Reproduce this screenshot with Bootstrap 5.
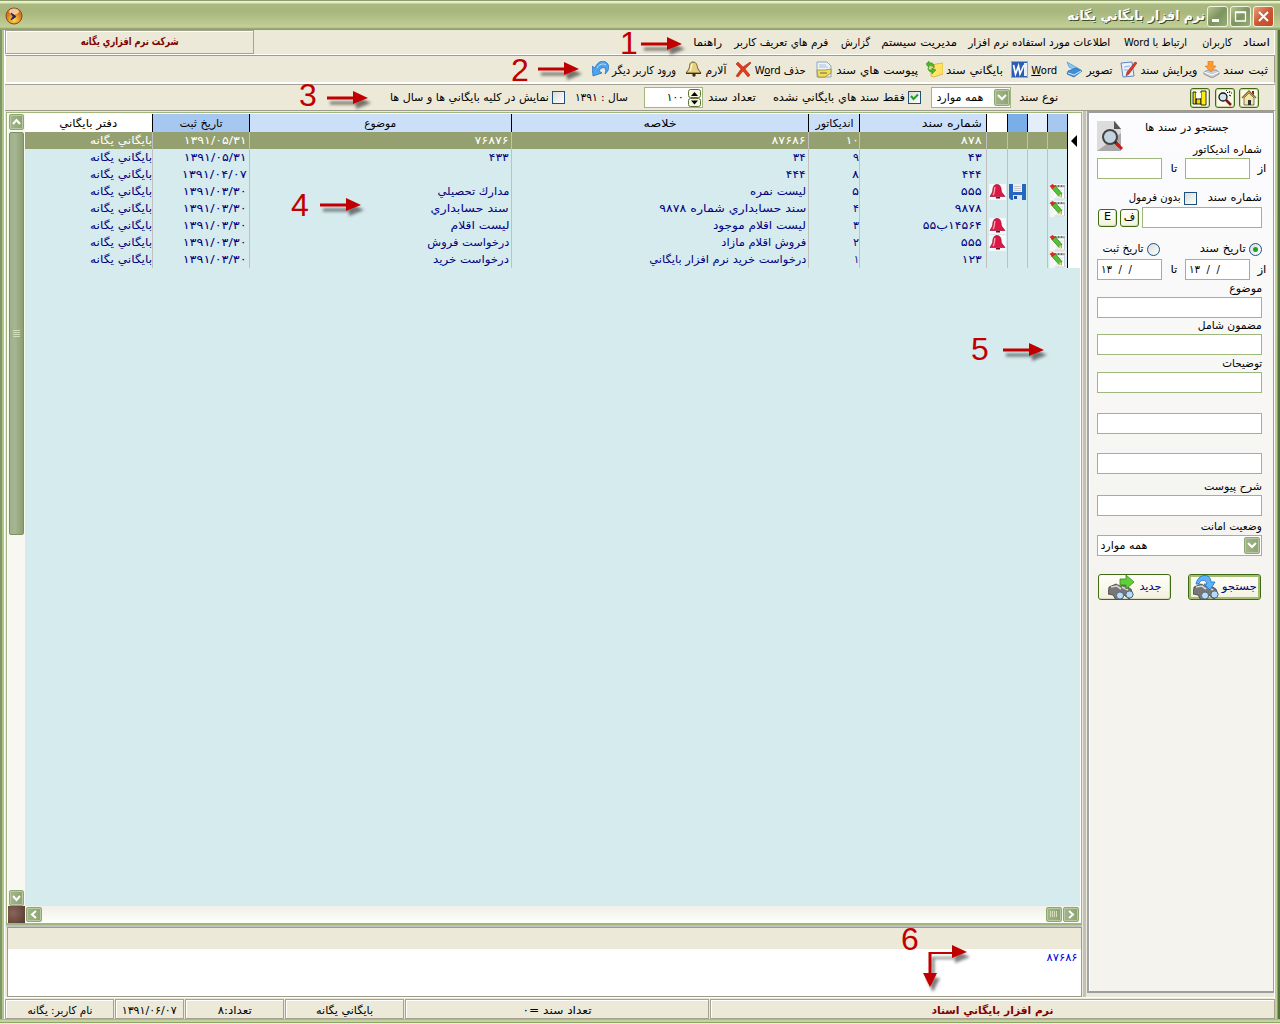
<!DOCTYPE html>
<html lang="fa" dir="rtl">
<head>
<meta charset="utf-8">
<title>نرم افزار بايگاني يگانه</title>
<link rel="stylesheet" href="https://cdn.jsdelivr.net/npm/bootstrap@5.3.0/dist/css/bootstrap.min.css">
<style>
body{width:1280px;height:1024px;overflow:hidden;font:11px/14px "DejaVu Sans",Tahoma,sans-serif;color:#000;background:#ece9d8}
svg{display:block;flex:none}
[data-w]{display:inline-block;white-space:nowrap;transform-origin:100% 50%;flex:none}
.win{width:1280px;height:1024px;padding:0 5px 5px 5px;position:relative;
 background:linear-gradient(#a9b87c,#a9b87c) 0 1019px/100% 1px no-repeat,linear-gradient(#c6d39a 0 2px,#8fa36c 2px 3px,#eef0d4 3px) 0 1020px/100% 4px no-repeat,
 linear-gradient(90deg,#7d9766 0 2px,#b3c389 2px 4px,#fff 4px 5px,#ece9d8 5px 1274px,#fff 1274px 1275px,#c3d094 1275px 1277px,#8ba36a 1277px 1278px,#55703f 1278px)}
.win>*{flex:none}
.titlebar{height:30px;margin:0 -5px;padding:2px 6px 0 5px;gap:2px;background:linear-gradient(#8a9c68 0,#8a9c68 1px,#f2f5d5 1px,#dfe6ba 3px,#a9b980 4px,#a8b77e 12px,#b6c48b 20px,#c2cf98 27px,#8c9f68 29px)}
.wbtn{width:21px;height:21px;border:1px solid #f0f4df;border-radius:3px;background:linear-gradient(135deg,#b5c48f,#7c9460 50%,#98ac76)}
.wbtn.close-x{background:linear-gradient(135deg,#e9a184,#cd5530 50%,#c54a27)}
.wtitle{color:#fff;font-weight:700;font-size:13px;text-shadow:1px 1px 0 #3f4b27}
.menurow{height:25px}
.menus{display:grid;grid-template-columns:38px 45px 77px 153px 87px 42px 106px 60px;justify-items:start;padding:0 5px 0 0}
.company{width:249px;height:24px;border:1px solid #a5a293;box-shadow:inset 1px 1px 0 #fff;color:#800000;font-weight:700}
.tools{height:29px;border:1px solid #9d9b8c;border-left-color:#fff;border-bottom:2px solid #fff;box-shadow:0 -1px 0 #fff,0 1px 0 #a5a293;display:grid;grid-template-columns:71px 85px 55px 54px 85px 112px 80px 50px 100px;padding:1px 6px 0 0}
.tools>span{display:flex;align-items:center;gap:3px}
.tools b{font-weight:400;padding-top:2px}
.tools svg{width:17px;height:17px}
.filters{height:27px;border-bottom:1px solid #9d9b8c;display:grid;grid-template-columns:24px 25px 152px 47px 90px 16px 149px 53px 75px 63px 16px 170px;justify-items:start;align-items:center;padding:1px 16px 0 0}
.ibtn{width:20px;height:20px;border:1px solid #3f6b12;border-radius:3px;background:#f9f8ea;box-shadow:inset 0 0 0 1px #cfd6ae}
.field{height:21px;border:1px solid #9fb67c;background:#fff;box-shadow:none;border-radius:0}
.chk{width:13px;height:13px;border:1px solid #1c5180;background:linear-gradient(135deg,#dcdcd7,#fff)}
.rad{width:13px;height:13px;border:1px solid #1c5180;border-radius:50%;background:linear-gradient(135deg,#dcdcd7,#fff)}
.sbtn{border:1px solid #8fa772;border-radius:2px;background:linear-gradient(90deg,#a3b58a,#8da371);box-shadow:inset 0 0 0 1px #b9c8a4;flex:none}
.mainarea{height:886px}
.rightpane{width:189px;padding:0 1px 0 1px}
.panel{width:187px;height:882px;border:2px solid #9b9ea0;border-left-color:#a0a4a8;border-right-width:1px;background:linear-gradient(#fcfcff,#f4f3ee 55%,#f4f3ee);box-shadow:inset 1px 1px 0 #fff}
.form-rows{display:grid;grid-template-columns:165px;justify-content:end;padding:4px 0 0 8px;
 grid-template-rows:24px 17px 21px 26px 23px 28px 24px 17px 21px 16px 21px 17px 21px 41px 40px 21px 21px 19px 21px 44px;align-items:end}
.form-rows>.cap{height:17px;display:flex;align-items:center}
.pair{display:flex;align-items:center;justify-content:flex-end;margin-right:-4px}
.gbtn{border:1px solid #3f6b12;border-radius:3px;background:linear-gradient(#fffffa,#f3f1dd);box-shadow:inset -1px -1px 0 #dedabf}
.gbtn.hot{box-shadow:inset 0 0 0 2px #a5bc74}
.splitv{width:3px;background:#c0c0c0;margin-left:1px}
.leftpane{width:1077px;padding:1px 0 0 1px}
.gridframe{height:813px;width:1076px;border:1px solid #9fb67c;border-bottom-width:2px;padding:1px;background:#fff}
.gridbody{height:792px;background:#d6ebee}
.vscroll{width:17px;background:#f8f7f2}
.thumb{width:15px;height:403px;margin:2px 1px 0;border:1px solid #7d9064;border-radius:2px;background:linear-gradient(90deg,#9fb28a,#a5b591 40%,#8da070)}
.recs{width:1055px;table-layout:fixed;border-collapse:separate;border-spacing:0;color:#000080}
.recs th,.recs td{padding:0 2px 0 0;height:17px;line-height:17px;border-left:1px solid #c0c0c0;text-align:right;white-space:nowrap;overflow:hidden;font-weight:400}
.recs th{height:18px;line-height:16px;background:#ccdff8;color:#000;border-left-color:#000;text-align:center;padding:2px 0 0}
.recs tr>*:last-child{border-left:0}
.recs td:first-child{background:#fff;border-left-color:#000;padding:0}
.recs .sel td{background:#94a070;color:#fff}
.recs .sel td:first-child{background:#fff;color:#000}
.recs svg{margin:0 auto}
.recs td.ic{padding:0}
.hscroll{height:17px;background:linear-gradient(#f0efe8,#fffffa)}
.stone{width:17px;height:17px;background:radial-gradient(circle at 30% 40%,#8a6558,#6b4b41 60%,#57392f)}
.memo{width:1075px;height:70px;margin:0 0 0 1px;border:1px solid #9d9b8c;background:#fff}
.memo .strip{height:21px;background:#ece9d8}
.memo .body-line{color:#0000e0;padding:2px 3px 0 0}
.gline{height:2px;background:#c0c0c0}
.status{height:22px;padding-top:2px;box-shadow:inset 0 1px 0 #fff}
.status>div{height:20px;border:1px solid #a5a293;box-shadow:inset 1px 1px 0 #fff;display:flex;align-items:center;justify-content:center;margin-right:1px;padding-top:3px}
.notes{position:absolute;left:0;top:0;pointer-events:none}
.notes text{font:32px "Liberation Sans",Arial,sans-serif;fill:#c00000}
</style>
<script src="https://cdn.jsdelivr.net/npm/bootstrap@5.3.0/dist/js/bootstrap.bundle.min.js"></script>
</head>
<body>
<svg width="0" height="0" class="position-absolute" direction="ltr"><defs>
<symbol id="save" viewBox="0 0 17 17"><path d="M1 11l4-2h8l3 2v2l-7 4-8-4z" fill="#c9ced6" stroke="#6d7684" stroke-width=".7"/><path d="M1 11l8 3 7-3" fill="none" stroke="#fff"/><path d="M5 0h5v5h3l-5 6-6-6h3z" fill="#ff9a2e" stroke="#e0731a" stroke-width=".6"/></symbol>
<symbol id="edit" viewBox="0 0 17 17"><path d="M1 2l11-1 2 14-11 1z" fill="#e9f1fb" stroke="#5d86c3"/><path d="M4 6l6-1M4 9l4 0" stroke="#8fb0de"/><path d="M15 1l2 1-8 11-3 2 1-4z" fill="#e03a26" stroke="#8b1c10" stroke-width=".5"/></symbol>
<symbol id="scan" viewBox="0 0 17 17"><path d="M1 1l14 8-2 2-10-5z" fill="#8cc9f4" stroke="#3a86cc" stroke-width=".6"/><path d="M2 10l8-3 6 3-8 6-7-3z" fill="#3f8fd8" stroke="#1c5ca5" stroke-width=".6"/><path d="M2 12l6 2 7-4" fill="none" stroke="#d9eefc"/></symbol>
<symbol id="word" viewBox="0 0 17 17"><rect x=".5" y=".5" width="16" height="16" fill="#2b5db5" stroke="#8aa9dc"/><rect x="13" y="2" width="3" height="13" fill="#e9f0fa"/><path d="M2.500 4l2 9 3-8 1.500 8 4-9" fill="none" stroke="#fff" stroke-width="1.700"/></symbol>
<symbol id="arch" viewBox="0 0 17 17"><path d="M5 5l5-2 7-1v11l-9 3-3-1z" fill="#ffe36a" stroke="#d9a91e" stroke-width=".7"/><path d="M0 3l3-3v2c4-1 6 2 5 5-1-2-2-3-5-2v2zM10 9L6 13V11C3 11 2 9 2 7c1 2 2 2 4 2V7z" fill="#4bb52c" stroke="#2d8417" stroke-width=".5"/></symbol>
<symbol id="att" viewBox="0 0 17 17"><path d="M1 1h10l4 4v11H1z" fill="#eef4fb" stroke="#8ea6c0"/><path d="M3 4h7M3 6h9" stroke="#a7bdd4"/><path d="M1 9h8l6-1v4l-6 4H2z" fill="#f2dd5c" stroke="#9c8a2a" stroke-width=".8"/><path d="M4 12h7" stroke="#665" /></symbol>
<symbol id="del" viewBox="0 0 17 17"><path d="M1 3l2-2 5 5 7-5 1 1-6 6 5 6-2 2-5-6-5 6-2-1 5-7z" fill="#e13a1e" stroke="#a81d0a" stroke-width=".5"/></symbol>
<symbol id="ybell" viewBox="0 0 17 17"><path d="M8 1c4 0 4 4 5 7l3 4H1l3-4c1-3 0-7 4-7z" fill="#e8cf7d" stroke="#4b3b12" stroke-width=".8"/><path d="M1 12h15v1H1z" fill="#3e300e"/><circle cx="9" cy="14" r="1.700" fill="#3e300e"/><path d="M7 3c-1 3-1 5-2 7" stroke="#fff6cf" stroke-width="1.500"/></symbol>
<symbol id="undo" viewBox="0 0 17 17"><path d="M0 5l1 10 9-3-3-2c1-3 4-4 6-3 1 1 1 3 0 6 4-3 5-8 2-11-4-4-10-1-12 5z" fill="#4da3f0" stroke="#1c69bd" stroke-width=".7"/><path d="M5 7c2-4 6-5 9-3" fill="none" stroke="#b9e0ff"/></symbol>
<symbol id="rbell" viewBox="0 0 17 16"><rect width="17" height="16" fill="#f4f8fa"/><path d="M8 .5c4 0 4 4 4.500 7.500l3.500 4.500H1L3.500 8c.5-3.500.5-7.500 4.500-7.500z" fill="#dc1745" stroke="#8c0726" stroke-width=".6"/><path d="M6 3c-1 3 0 6-2 8" stroke="#ffa0b3" stroke-width="1.300" fill="none"/><rect x="7" y="13" width="4" height="1.500" fill="#7a0620"/></symbol>
<symbol id="disk" viewBox="0 0 17 16"><path d="M0 0h17v16H2l-2-2z" fill="#2566c0"/><rect x="4" y="0" width="9" height="8" fill="#eef1f4"/><path d="M5 2.500h7M5 4.500h7M5 6.500h7" stroke="#c4c8ce"/><rect x="4" y="11" width="9" height="5" fill="#dfe6ee"/><rect x="5" y="12" width="3" height="3" fill="#1c4f99"/></symbol>
<symbol id="note" viewBox="0 0 16 16"><rect width="16" height="16" fill="#f3f6f3"/><path d="M4 3h11v12H5" fill="#fff" stroke="#c3cdd3"/><path d="M7 6h7M9 9h5M6 13h4" stroke="#d3dade"/><path d="M5 2h10" stroke="#444" stroke-width="1.500" stroke-dasharray="2 1"/><path d="M2 4l4-2 6 7v4l-3-1z" fill="#53c234" stroke="#277d15" stroke-width=".7"/><path d="M0 2l3-2 3 2-3 3z" fill="#d42c1e"/><path d="M9 12l3 2v-4z" fill="#f1d27a"/></symbol>
<symbol id="bino" viewBox="0 0 26 17"><path d="M1 4l7-3 4 2 4-1 7 4 2 6-4 4-5-4-2 4-6 1-3-5-5-1z" fill="#777" stroke="#333" stroke-width=".7"/><path d="M3 4l6-1 4 3M14 4l6 3" stroke="#d7d7d7" stroke-width="1.600" fill="none"/><circle cx="12" cy="12.500" r="3.600" fill="#b5dcfb" stroke="#567"/><circle cx="21.500" cy="11.500" r="3.600" fill="#b5dcfb" stroke="#567"/></symbol>
<g id="arr"><path d="M0 -1.500H26V-7L41 0 26 6V1.500H0z" fill="#c00000"/></g>
<filter id="sh" x="-20%" y="-60%" width="150%" height="260%"><feDropShadow dx="3" dy="5" stdDeviation="1.500" flood-color="#000" flood-opacity=".5"/></filter>
</defs></svg>

<div class="win d-flex flex-column">
 <header class="titlebar d-flex align-items-center">
  <span class="wbtn close-x"><svg width="19" height="19"><path d="M5 5l9 9M14 5l-9 9" stroke="#fff" stroke-width="2"/></svg></span>
  <span class="wbtn"><svg width="19" height="19"><path d="M4.500 5h10v9h-10zM4 5.500h11" fill="none" stroke="#fff" stroke-width="1.300"/></svg></span>
  <span class="wbtn"><svg width="19" height="19"><path d="M4 13.500h7" stroke="#fff" stroke-width="3"/></svg></span>
  <span class="wtitle" data-w="138">نرم افزار بايگاني يگانه</span>
  <svg class="me-auto" width="18" height="18"><defs><radialGradient id="og" cy=".75"><stop offset="0" stop-color="#ffd84a"/><stop offset="1" stop-color="#d9761b"/></radialGradient></defs><circle cx="9" cy="9" r="8" fill="url(#og)" stroke="#8a4a1a"/><ellipse cx="9" cy="4.500" rx="5" ry="3" fill="#fff" opacity=".6"/><path d="M6 6l5 3.500-5 3.500 2-3.500z" fill="#1d2a78" stroke="#1d2a78"/></svg>
 </header>

 <nav class="menurow d-flex justify-content-between">
  <div class="menus align-items-center">
   <span data-w="27">اسناد</span><span data-w="30">کاربران</span><span data-w="63">ارتباط با Word</span><span data-w="142">اطلاعات مورد استفاده نرم افزار</span><span data-w="76">مديريت سيستم</span><span data-w="29">گزارش</span><span data-w="94">فرم هاي تعريف کاربر</span><span data-w="29">راهنما</span>
  </div>
  <div class="company d-flex align-items-center justify-content-center"><span data-w="98">شركت نرم افزاري يگانه</span></div>
 </nav>

 <div class="tools">
  <span><b data-w="45">ثبت سند</b><svg><use href="#save"/></svg></span>
  <span><b data-w="57">ويرايش سند</b><svg><use href="#edit"/></svg></span>
  <span><b data-w="26">تصوير</b><svg><use href="#scan"/></svg></span>
  <span><b data-w="26"><u>W</u>ord</b><svg><use href="#word"/></svg></span>
  <span><b data-w="57">بايگاني سند</b><svg><use href="#arch"/></svg></span>
  <span><b data-w="82">پيوست هاي سند</b><svg><use href="#att"/></svg></span>
  <span><b data-w="51">حذف W<u>o</u>rd</b><svg><use href="#del"/></svg></span>
  <span><b data-w="21">آلارم</b><svg><use href="#ybell"/></svg></span>
  <span><b data-w="64">ورود كاربر ديگر</b><svg><use href="#undo"/></svg></span>
 </div>

 <div class="filters">
  <span class="ibtn"><svg width="18" height="18"><path d="M2 9l7-7 7 7" fill="none" stroke="#8a6a10" stroke-width="1.500"/><path d="M4 9l5-5 5 5v7H4z" fill="#f5e6a6" stroke="#444" stroke-width=".7"/><path d="M12 2h2v4l-2-2z" fill="#a01020"/><path d="M8 11h3v5H8z" fill="#333"/></svg></span>
  <span class="ibtn"><svg width="18" height="18"><circle cx="7" cy="8" r="4" fill="#cfe6ea" stroke="#111" stroke-width="1.300"/><path d="M10 11l5 5" stroke="#8c1010" stroke-width="2.500"/><path d="M11 3l1 1M13 6l2 1M10 1l1 1M14 2l-1 2M15 4l1 0" stroke="#111"/></svg></span>
  <span class="ibtn"><svg width="18" height="18"><path d="M2 3h3v12H2zM5 10h5v5H5z" fill="#e9d90c" stroke="#000" stroke-width=".8"/><path d="M10 2h5v14h-5z" fill="#ffee10" stroke="#000" stroke-width=".8"/><path d="M5 4h5v5H5z" fill="#fff"/></svg></span>
  <span data-w="39">نوع سند</span>
  <span class="field d-flex align-items-center justify-content-between ps-1" style="width:80px"><span class="sbtn"><svg width="14" height="15"><path d="M3 5l4 4 4-4" fill="none" stroke="#fff" stroke-width="2"/></svg></span><span data-w="47">همه موارد</span></span>
  <span class="chk"><svg width="11" height="11"><path d="M2 4l2.500 3L9 2.500" fill="none" stroke="#21a121" stroke-width="2"/></svg></span>
  <span data-w="132">فقط سند هاي بايگاني نشده</span>
  <span data-w="48">تعداد سند</span>
  <span class="field d-flex align-items-center gap-1" style="width:59px"><svg width="14" height="18"><rect x=".5" y=".5" width="12" height="8" rx="2" fill="#f6f4e4" stroke="#5d7434"/><rect x=".5" y="9.500" width="12" height="8" rx="2" fill="#f6f4e4" stroke="#5d7434"/><path d="M3 7l3.500-4L10 7zM3 11.500h7l-3.500 4z"/></svg><span data-w="17">۱۰۰</span></span>
  <span data-w="53">سال : ۱۳۹۱</span>
  <span class="chk"></span>
  <span data-w="159">نمايش در كليه بايگاني ها و سال ها</span>
 </div>

 <main class="mainarea d-flex">
  <aside class="rightpane">
   <div class="panel"><div class="form-rows">
    <div class="d-flex justify-content-between" style="height:20px"><span></span><span class="d-flex align-items-start" style="gap:21px"><span data-w="84">جستجو در سند ها</span><svg width="27" height="32" viewBox="0 0 27 32"><path d="M0 0h18l6 8v22H0z" fill="#a9a9a9"/><path d="M0 0h17l7 8v4L3 28 0 30z" fill="#dcdcdc"/><path d="M17 0v8h7z" fill="#555"/><circle cx="13" cy="16" r="7" fill="#c3d4de" stroke="#444" stroke-width="2"/><path d="M18 21l4 4" stroke="#222" stroke-width="3"/><path d="M19 22l6 6" stroke="#d01818" stroke-width="3"/></svg></span></div>
    <div class="cap"><span data-w="69">شماره انديكاتور</span></div>
    <div class="pair"><span data-w="9">از</span><span class="field" style="width:65px;margin:0 7px 0 8px"></span><span data-w="7">تا</span><span class="field" style="width:65px;margin-right:8px"></span></div>
    <div class="d-flex align-items-center"><span data-w="54">شماره سند</span><span class="chk" style="margin:0 11px 0 3px"></span><span data-w="52">بدون فرمول</span></div>
    <div class="d-flex align-items-center" style="gap:3px"><span class="field" style="width:120px"></span><span class="gbtn text-center" style="width:19px;height:18px">ف</span><span class="gbtn text-center" style="width:19px;height:18px">E</span></div>
    <div class="d-flex align-items-center"><span class="rad"><svg width="11" height="11"><circle cx="5.500" cy="5.500" r="2.500" fill="#21a121"/></svg></span><span style="margin-right:3px"><span data-w="46">تاريخ سند</span></span><span class="rad" style="margin:0 40px 0 3px"></span><span data-w="41">تاريخ ثبت</span></div>
    <div class="pair"><span data-w="9">از</span><span class="field" style="width:65px;margin:0 7px 0 8px;text-align:left;padding:3px 0 0 3px" dir="ltr"><span data-w="31">۱۳ &nbsp;/ &nbsp;/</span></span><span data-w="7">تا</span><span class="field" style="width:65px;margin-right:8px;text-align:left;padding:3px 0 0 3px" dir="ltr"><span data-w="31">۱۳ &nbsp;/ &nbsp;/</span></span></div>
    <div class="cap"><span data-w="33">موضوع</span></div><div class="field"></div>
    <div class="cap"><span data-w="64">مضمون شامل</span></div><div class="field"></div>
    <div class="cap"><span data-w="40">توضيحات</span></div><div class="field"></div>
    <div class="field"></div><div class="field"></div>
    <div class="cap"><span data-w="58">شرح پيوست</span></div><div class="field"></div>
    <div class="cap"><span data-w="61">وضعيت امانت</span></div>
    <div class="field d-flex align-items-center justify-content-between"><span class="sbtn" style="margin-right:1px"><svg width="14" height="15"><path d="M3 5l4 4 4-4" fill="none" stroke="#fff" stroke-width="2"/></svg></span><span style="padding-left:2px"><span data-w="47">همه موارد</span></span></div>
    <div class="d-flex justify-content-between" style="padding:0 1px;color:#000080">
     <span class="gbtn hot d-flex align-items-center justify-content-center" style="width:73px;height:26px;gap:2px"><span data-w="35">جستجو</span><svg width="27" height="24" viewBox="0 0 27 24"><use href="#bino" y="8" width="26" height="17"/><path d="M3 9C5-2 18-2 18 7h4l-5 8-6-6h3C13 4 7 4 6 9z" fill="#5fb3f7" stroke="#1d6cc0" stroke-width=".8"/></svg></span>
     <span class="gbtn d-flex align-items-center justify-content-center" style="width:73px;height:26px;gap:4px"><span data-w="22">جديد</span><svg width="27" height="24" viewBox="0 0 27 24"><use href="#bino" y="8" width="26" height="17"/><path d="M12 4h6V0l8 7-8 7v-4h-6z" fill="#5fd03a" stroke="#2d8a14" stroke-width=".8"/></svg></span>
    </div>
   </div></div>
  </aside>
  <div class="splitv"></div>
  <section class="leftpane">
   <div class="gridframe">
    <div class="gridbody d-flex">
     <table class="recs align-self-start">
      <colgroup><col style="width:13px"><col style="width:20px"><col style="width:20px"><col style="width:20px"><col style="width:21px"><col style="width:127px"><col style="width:51px"><col style="width:297px"><col style="width:262px"><col style="width:97px"><col style="width:127px"></colgroup>
      <thead><tr><th style="background:#fff"></th><th style="background:#a6c8f0"></th><th style="background:#e3eefa"></th><th style="background:#7aaee9"></th><th style="background:#fff"></th><th class="pe-1" style="text-align:right"><span data-w="60">شماره سند</span></th><th><span data-w="38">انديکاتور</span></th><th><span data-w="33">خلاصه</span></th><th><span data-w="32">موضوع</span></th><th style="background:#a6c8f0"><span data-w="43">تاريخ ثبت</span></th><th style="background:#fff"><span data-w="58">دفتر بايگاني</span></th></tr></thead>
      <tbody id="rows"></tbody>
     </table>
     <div class="vscroll d-flex flex-column">
      <span class="sbtn" style="width:15px;height:16px;margin:0 1px"><svg width="13" height="14"><path d="M3 9l3.500-4L10 9" fill="none" stroke="#fff" stroke-width="2"/></svg></span>
      <div class="thumb d-flex align-items-center justify-content-center"><svg width="7" height="8"><path d="M0 .5h7M0 2.500h7M0 4.500h7M0 6.500h7" stroke="#d3deb8"/></svg></div>
      <span class="sbtn mt-auto" style="width:15px;height:16px;margin:0 1px"><svg width="13" height="14"><path d="M3 5l3.500 4L10 5" fill="none" stroke="#fff" stroke-width="2"/></svg></span>
     </div>
    </div>
    <div class="hscroll d-flex align-items-center" style="gap:1px;padding-right:1px">
     <span class="sbtn" style="width:16px;height:15px"><svg width="14" height="13"><path d="M5 3l4 3.500L5 10" fill="none" stroke="#fff" stroke-width="2"/></svg></span>
     <span class="sbtn" style="width:16px;height:15px"><svg width="14" height="13"><path d="M3.500 3v6M5.500 3v6M7.500 3v6M9.500 3v6" stroke="#d3deb8"/></svg></span>
     <span class="sbtn me-auto" style="width:16px;height:15px"><svg width="14" height="13"><path d="M9 3L5 6.500 9 10" fill="none" stroke="#fff" stroke-width="2"/></svg></span>
     <span class="stone"></span>
    </div>
   </div>
   <div class="gline"></div>
   <div class="memo"><div class="strip"></div><div class="body-line"><span data-w="31">۸۷۶۸۶</span></div></div>
  </section>
 </main>

 <footer class="status d-flex">
  <div style="width:565px;color:#800000;font-weight:700;margin-right:0"><span data-w="122">نرم افزار بايگاني اسناد</span></div>
  <div style="width:304px"><span data-w="69">تعداد سند =۰</span></div>
  <div style="width:119px"><span data-w="57">بايگاني يگانه</span></div>
  <div style="width:99px"><span data-w="34">تعداد:۸</span></div>
  <div style="width:69px"><span data-w="55">۱۳۹۱/۰۶/۰۷</span></div>
  <div style="width:109px"><span data-w="65">نام کاربر: يگانه</span></div>
 </footer>

 <svg class="notes" width="1280" height="1024" direction="ltr">
  <g direction="ltr"><text x="620" y="54">1</text><text x="511" y="81">2</text><text x="299" y="106">3</text><text x="291" y="216">4</text><text x="971" y="360">5</text><text x="901" y="950">6</text></g>
  <g filter="url(#sh)"><use href="#arr" x="641" y="44"/><use href="#arr" x="538" y="69"/><use href="#arr" x="327" y="98"/><use href="#arr" x="320" y="205"/><use href="#arr" x="1003" y="350"/><path d="M928.500 952H952V945L967 952 952 958V954H931.500V973H937L930 987 923 973H928.500z" fill="#c00000"/></g>
 </svg>
</div>
<script>
// number, index, summary, subject, date, icons; pairs hold [text, width in px]
var rows=[
 [['۸۷۸',21],['۱۰',13],['۸۷۶۸۶',34],['۷۶۸۷۶',34],['۱۳۹۱/۰۵/۳۱',63],''],
 [['۴۳',14],['۹',6],['۳۴',13],['۴۳۳',20],['۱۳۹۱/۰۵/۳۱',63],''],
 [['۴۴۴',20],['۸',7],['۴۴۴',20],['',0],['۱۳۹۱/۰۴/۰۷',65],''],
 [['۵۵۵',21],['۵',7],['ليست نمره',56],['مدارك تحصيلي',72],['۱۳۹۱/۰۳/۳۰',64],'nds'],
 [['۹۸۷۸',27],['۴',6],['سند حسابداري شماره ۹۸۷۸',147],['سند حسابداري',78],['۱۳۹۱/۰۳/۳۰',64],'n'],
 [['۱۴۵۶۴ب۵۵',59],['۳',6],['ليست اقلام موجود',93],['ليست اقلام',59],['۱۳۹۱/۰۳/۳۰',64],'s'],
 [['۵۵۵',21],['۲',6],['فروش اقلام مازاد',85],['درخواست فروش',82],['۱۳۹۱/۰۳/۳۰',64],'ns'],
 [['۱۲۳',20],['۱',5],['درخواست خريد نرم افزار بايگاني',157],['درخواست خريد',76],['۱۳۹۱/۰۳/۳۰',64],'n']];
function ic(on,id){return '<td class="ic">'+(on?'<svg width="17" height="16"><use href="#'+id+'" width="17" height="16"/></svg>':'')+'</td>';}
function cell(c,x){return '<td'+(x||'')+'>'+(c[0]?'<span data-w="'+c[1]+'">'+c[0]+'</span>':'')+'</td>';}
document.getElementById('rows').innerHTML=rows.map(function(r,i){
 var f=r[5];
 return '<tr'+(i?'':' class="sel"')+'><td>'+(i?'':'<svg width="8" height="12"><path d="M7 0v12L1 6z"/></svg>')+'</td>'+ic(f.includes('n'),'note')+'<td></td>'+ic(f.includes('d'),'disk')+ic(f.includes('s'),'rbell')+
 cell(r[0],' class="pe-1"')+cell(r[1],' class="pe-0"')+cell(r[2])+cell(r[3])+cell(r[4])+cell(['بايگاني يگانه',62],' class="pe-0"')+'</tr>';}).join('');
// scale each label horizontally to its nominal width
document.querySelectorAll('[data-w]').forEach(function(e){
 var w=+e.dataset.w,n=e.getBoundingClientRect().width;
 if(e.closest('[dir=ltr]')){e.style.transformOrigin='0 50%';e.style.marginRight=(w-n)+'px';}
 else e.style.marginLeft=(w-n)+'px';
 e.style.transform='scaleX('+w/n+')';
});
</script>
</body>
</html>
